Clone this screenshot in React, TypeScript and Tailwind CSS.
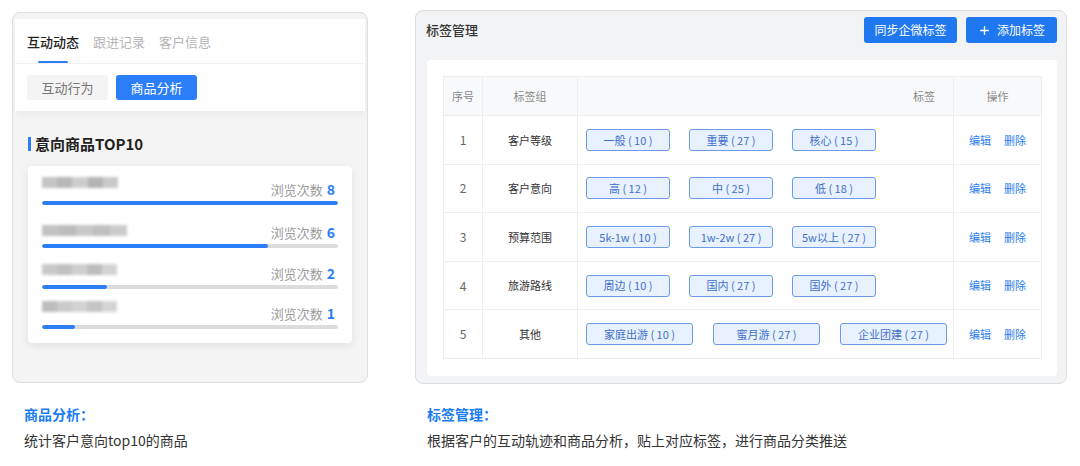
import { Plus } from "lucide-react";

type Product = {
  blur: string[];
  rowClass: string;
  blurClass: string;
  labelClass: string;
  count: number;
  pct: number;
};

const products: Product[] = [
  { blur: ["#c4c4c4", "#b8b8b8", "#cdcdcd", "#b4b4b4", "#c9c9c9"], rowClass: "mt-0", blurClass: "mt-0 w-[76px]", labelClass: "mt-[3px]", count: 8, pct: 100 },
  { blur: ["#c2c2c2", "#bcbcbc", "#c8c8c8", "#bfbfbf", "#cbcbcb"], rowClass: "mt-[18px]", blurClass: "mt-[2px] w-[85px]", labelClass: "mt-0", count: 6, pct: 76.5 },
  { blur: ["#c9c9c9", "#c0c0c0", "#cfcfcf", "#bdbdbd", "#d3d3d3"], rowClass: "mt-[16px]", blurClass: "mt-0 w-[75px]", labelClass: "mt-0", count: 2, pct: 22 },
  { blur: ["#bdbdbd", "#cbcbcb", "#d2d2d2", "#c4c4c4", "#d4d4d4"], rowClass: "mt-[12px]", blurClass: "mt-0 w-[75px]", labelClass: "mt-[3px]", count: 1, pct: 11 },
];

type TagRow = {
  no: number;
  group: string;
  tags: string[];
  wide?: boolean;
};

const tagRows: TagRow[] = [
  { no: 1, group: "客户等级", tags: ["一般 ( 10 )", "重要 ( 27 )", "核心 ( 15 )"] },
  { no: 2, group: "客户意向", tags: ["高 ( 12 )", "中 ( 25 )", "低 ( 18 )"] },
  { no: 3, group: "预算范围", tags: ["5k-1w ( 10 )", "1w-2w ( 27 )", "5w以上 ( 27 )"] },
  { no: 4, group: "旅游路线", tags: ["周边 ( 10 )", "国内 ( 27 )", "国外 ( 27 )"] },
  { no: 5, group: "其他", tags: ["家庭出游 ( 10 )", "蜜月游 ( 27 )", "企业团建 ( 27 )"], wide: true },
];

const font = { fontFamily: '"Noto Sans CJK SC", "Noto Sans", sans-serif' };

function ProductPanel() {
  return (
    <div className="w-[356px] h-[371px] rounded-[8px] border border-[#dedede] bg-[#f4f4f4] px-[2px] pt-[6px] overflow-hidden">
      {/* Tabs + sub buttons */}
      <div className="bg-white shadow-[0_4px_8px_rgba(0,0,0,0.04)]">
        <div className="flex gap-[14px] pl-[12px] border-b border-[#f0f0f0]">
          {["互动动态", "跟进记录", "客户信息"].map((t, i) => (
            <div key={t} className="flex flex-col items-center pt-[14px]">
              <span
                className={
                  i === 0
                    ? "text-[13px] leading-[18px] font-medium text-[#222]"
                    : "text-[13px] leading-[18px] text-[#b5b5b5]"
                }
              >
                {t}
              </span>
              <div className={i === 0 ? "mt-[10px] h-[2px] w-[30px] bg-[#2c7ef8] rounded-full" : "mt-[10px] h-[2px] w-[30px]"} />
            </div>
          ))}
        </div>
        <div className="flex gap-[8px] pl-[12px] pt-[11px] pb-[11px]">
          <div className="w-[81px] h-[25px] rounded-[3px] bg-[#f4f4f4] text-[#777] text-[13px] flex items-center justify-center">
            互动行为
          </div>
          <div className="w-[81px] h-[25px] rounded-[3px] bg-[#2c7ef8] text-white text-[13px] flex items-center justify-center">
            商品分析
          </div>
        </div>
      </div>

      <div className="px-[13px]">
        <div className="mt-[23px] flex items-center h-[20px]">
          <div className="w-[3px] h-[14px] bg-[#2c7ef8] mr-[4px]" />
          <span className="text-[15px] font-bold text-[#222] leading-[20px]">意向商品TOP10</span>
        </div>

        <div className="mt-[12px] w-[324px] bg-white rounded-[4px] shadow-[0_3px_10px_rgba(0,0,0,0.08)] px-[14px] pt-[11px] pb-[14px]">
          {products.map((p, idx) => (
            <div key={idx} className={p.rowClass}>
              <div className="flex justify-between items-start">
                <div className={`flex h-[11px] blur-[1.5px] ${p.blurClass}`}>
                  {p.blur.map((c, j) => (
                    <div key={j} className="flex-1 h-full" style={{ backgroundColor: c }} />
                  ))}
                </div>
                <div className={`flex items-baseline gap-[4px] pr-[3px] leading-[18px] ${p.labelClass}`}>
                  <span className="text-[13px] text-[#9a9a9a]">浏览次数</span>
                  <span className="text-[14px] font-bold text-[#2c7ef8]">{p.count}</span>
                </div>
              </div>
              <div className="mt-[2px] h-[4px] rounded-full bg-[#dcdcdc] overflow-hidden">
                <div className="h-full bg-[#2c7ef8] rounded-full" style={{ width: `${p.pct}%` }} />
              </div>
            </div>
          ))}
        </div>
      </div>
    </div>
  );
}

function TagPanel() {
  return (
    <div className="w-[652px] h-[374px] rounded-[8px] border border-[#dcdcdc] bg-[#f2f3f5]">
      <div className="flex items-center justify-between pl-[10px] pr-[9px] pt-[6px]">
        <span className="text-[13px] font-medium text-[#333]">标签管理</span>
        <div className="flex gap-[9px]">
          <div className="w-[93px] h-[26px] rounded-[3px] bg-[#1f78f0] text-white text-[12px] flex items-center justify-center">
            同步企微标签
          </div>
          <div className="w-[91px] h-[26px] rounded-[3px] bg-[#1f78f0] text-white text-[12px] flex items-center justify-center gap-[6px]">
            <Plus className="w-[13px] h-[13px]" strokeWidth={2.5} />
            添加标签
          </div>
        </div>
      </div>

      <div className="mt-[17px] ml-[11px] mr-[9px] bg-white rounded-[4px] p-[16px] pb-[17px]">
        <table className="w-[598px] border-collapse table-fixed text-[11px]">
          <colgroup>
            <col className="w-[39px]" />
            <col className="w-[95px]" />
            <col className="w-[376px]" />
            <col className="w-[88px]" />
          </colgroup>
          <thead>
            <tr className="h-[39px] bg-[#f8f9fb] text-[#8a8a8a]">
              <th className="border border-[#eceef3] font-normal">序号</th>
              <th className="border border-[#eceef3] font-normal">标签组</th>
              <th className="border border-[#eceef3] font-normal text-right pr-[18px]">标签</th>
              <th className="border border-[#eceef3] font-normal">操作</th>
            </tr>
          </thead>
          <tbody>
            {tagRows.map((r) => (
              <tr key={r.no} className="h-[48.6px]">
                <td className="border border-[#eceef3] text-center text-[#666] text-[12px]">{r.no}</td>
                <td className="border border-[#eceef3] text-center text-[#333]">{r.group}</td>
                <td className="border border-[#eceef3] pl-[8px]">
                  <div className={r.wide ? "flex gap-[20px]" : "flex gap-[19px]"}>
                    {r.tags.map((t) => (
                      <div
                        key={t}
                        className={
                          (r.wide ? "w-[107px]" : "w-[84px]") +
                          " h-[22px] rounded-[3px] border border-[#6b9be9] bg-[#e8f1fe] text-[#3f6fca] text-[11px] flex items-center justify-center whitespace-pre"
                        }
                      >
                        {t}
                      </div>
                    ))}
                  </div>
                </td>
                <td className="border border-[#eceef3]">
                  <div className="flex justify-center gap-[13px] text-[#2b7df0]">
                    <span>编辑</span>
                    <span>删除</span>
                  </div>
                </td>
              </tr>
            ))}
          </tbody>
        </table>
      </div>
    </div>
  );
}

export default function App() {
  return (
    <div className="w-[1080px] h-[466px] bg-white flex" style={font}>
      <div className="ml-[12px] mt-[12px] flex flex-col">
        <ProductPanel />
        <div className="mt-[21px] pl-[12px]">
          <div className="text-[14px] leading-[20px] font-bold text-[#1a7cf5]">商品分析：</div>
          <div className="mt-[6px] text-[14px] leading-[20px] text-[#333]">统计客户意向top10的商品</div>
        </div>
      </div>

      <div className="ml-[47px] mt-[10px] flex flex-col">
        <TagPanel />
        <div className="mt-[20px] pl-[12px]">
          <div className="text-[14px] leading-[20px] font-bold text-[#1a7cf5]">标签管理：</div>
          <div className="mt-[6px] text-[14px] leading-[20px] text-[#333]">根据客户的互动轨迹和商品分析，贴上对应标签，进行商品分类推送</div>
        </div>
      </div>
    </div>
  );
}
